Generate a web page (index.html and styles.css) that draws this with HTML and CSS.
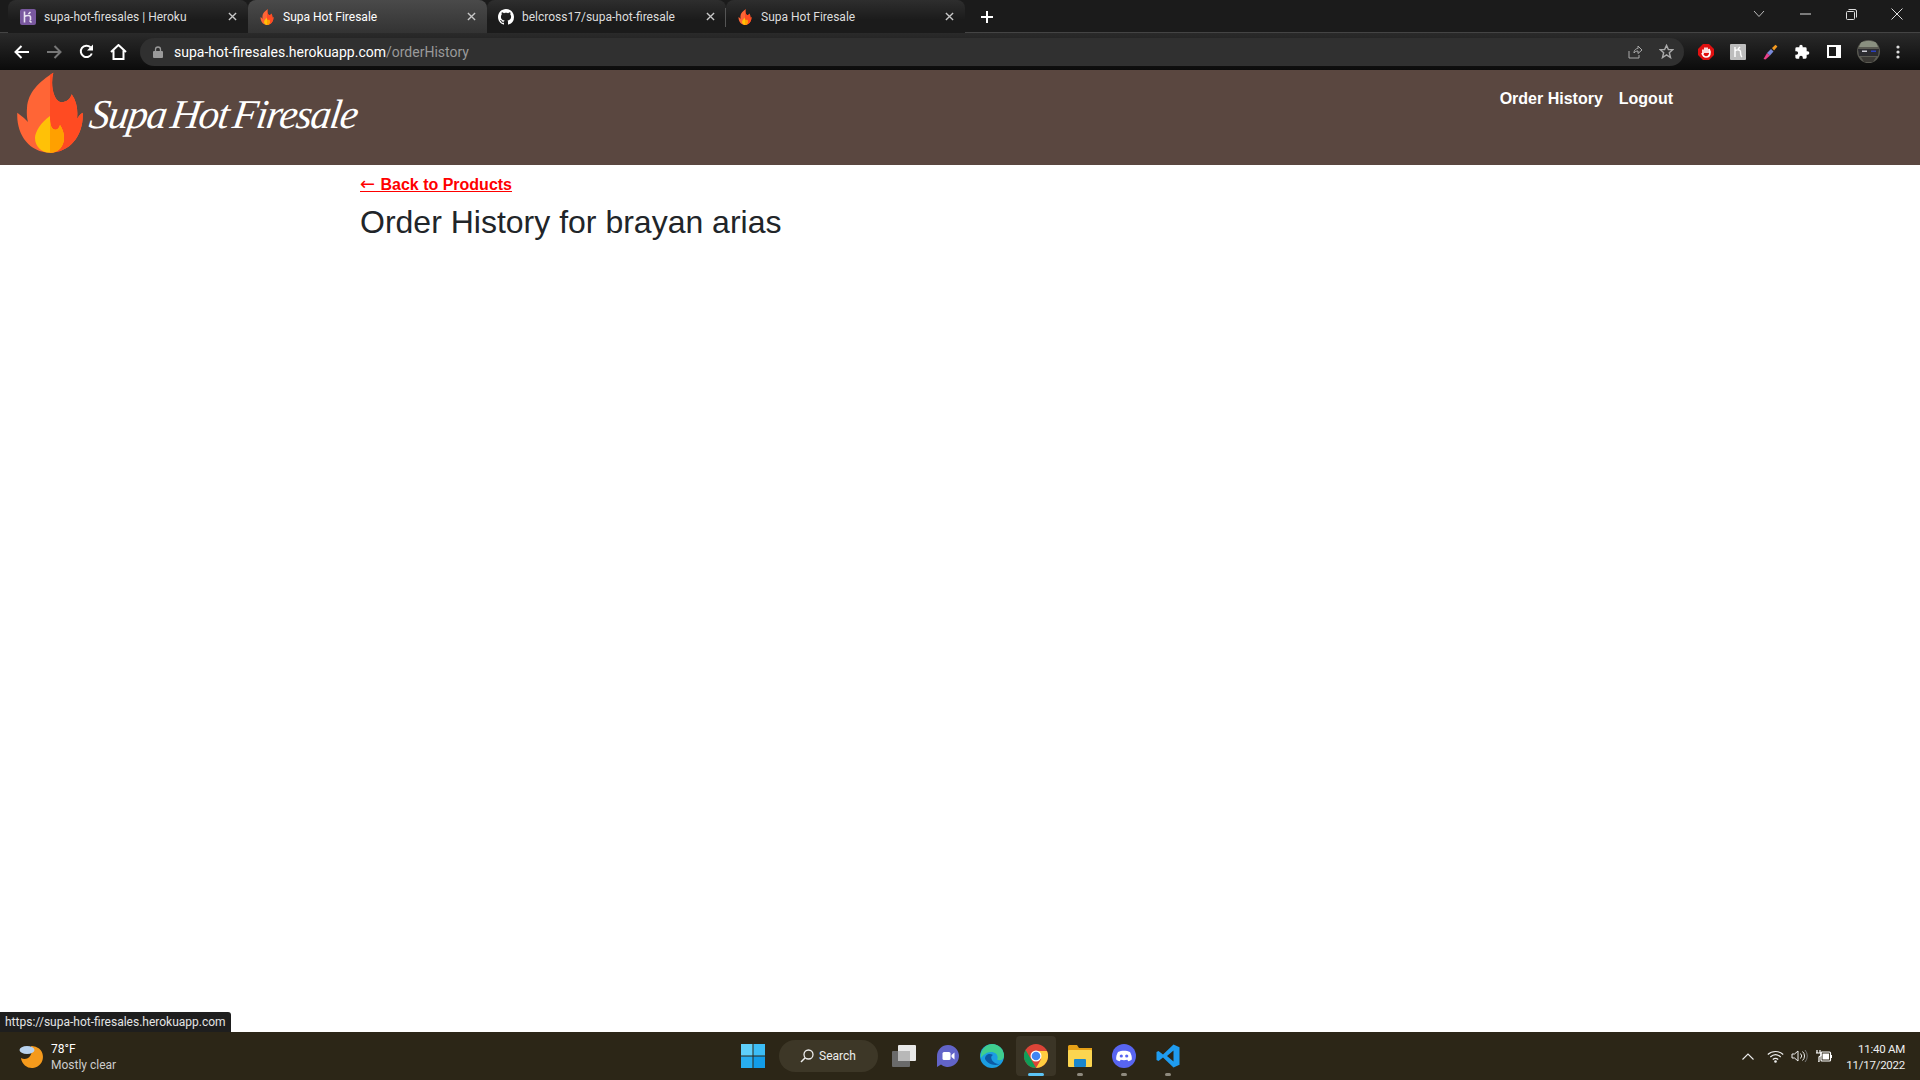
FILE: index.html
```html
<!DOCTYPE html>
<html lang="en">
<head>
    <meta charset="UTF-8">
    <title>Supa Hot Firesale</title>
    <link rel="stylesheet" href="styles.css">
</head>

<body>
    <svg class="defs" width="0" height="0">
        <defs>
            <clipPath id="rightHalf"><rect x="33" y="0" width="34" height="82"></rect></clipPath>
            <symbol id="flame" viewBox="0 0 66 81">
                <path id="flameOuter" fill="#ff6536" d="M36.3 .7C22 10 11 20 10 36C9.5 42 10 47 11 50L7 46L.3 40.7C-1 62 12 80.7 33 80.7C54 80.7 67 62 65.7 40.7C63 42 61 45 60 47C61 38 60 30 54.7 22.3C53 28 48 31 43 30C37 28 33 14 36.3 .7Z"></path>
                <path fill="#ff4b22" clip-path="url(#rightHalf)" d="M36.3 .7C22 10 11 20 10 36C9.5 42 10 47 11 50L7 46L.3 40.7C-1 62 12 80.7 33 80.7C54 80.7 67 62 65.7 40.7C63 42 61 45 60 47C61 38 60 30 54.7 22.3C53 28 48 31 43 30C37 28 33 14 36.3 .7Z"></path>
                <path fill="#ffc107" d="M33 44C24 50 18 60 18 66C18 75 25 80.7 33 80.7C41 80.7 47 75 47 66C47 60 45 56 43 53C42 57 39 59 36 57C33 54 33 49 33 44Z"></path>
                <path fill="#ffa000" clip-path="url(#rightHalf)" d="M33 44C24 50 18 60 18 66C18 75 25 80.7 33 80.7C41 80.7 47 75 47 66C47 60 45 56 43 53C42 57 39 59 36 57C33 54 33 49 33 44Z"></path>
            </symbol>
            <symbol id="closeX" viewBox="0 0 10 10">
                <path d="M1 1L9 9M9 1L1 9" stroke="currentColor" stroke-width="1.5" fill="none"></path>
            </symbol>
        </defs>
    </svg>

    <div class="browser">
        <!-- Tab strip -->
        <div class="tabstrip">
            <div class="tab">
                <svg class="favicon" viewBox="0 0 16 16">
                    <rect width="16" height="16" rx="2" fill="#79589f"></rect>
                    <path d="M4.500 2.500V13.500M4.500 7.500C7 6 10.500 6 10.500 8V11M10.500 3L8.500 5M9.500 11.500L11.500 13.500" stroke="#e9e2f2" stroke-width="1.600" fill="none"></path>
                </svg>
                <span class="tab-title">supa-hot-firesales | Heroku</span>
                <svg class="tab-close"><use href="#closeX"></use></svg>
            </div>
            <div class="tab tab-active">
                <svg class="favicon"><use href="#flame"></use></svg>
                <span class="tab-title">Supa Hot Firesale</span>
                <svg class="tab-close"><use href="#closeX"></use></svg>
            </div>
            <div class="tab tab-sep">
                <svg class="favicon" viewBox="0 0 16 16">
                    <path fill="#fff" d="M8 0C3.58 0 0 3.58 0 8c0 3.54 2.29 6.53 5.47 7.59.4.07.55-.17.55-.38 0-.19-.01-.82-.01-1.49-2.01.37-2.53-.49-2.69-.94-.09-.23-.48-.94-.82-1.13-.28-.15-.68-.52-.01-.53.63-.01 1.08.58 1.23.82.72 1.21 1.87.87 2.33.66.07-.52.28-.87.51-1.07-1.78-.2-3.64-.89-3.64-3.95 0-.87.31-1.59.82-2.15-.08-.2-.36-1.02.08-2.12 0 0 .67-.21 2.2.82.64-.18 1.32-.27 2-.27s1.36.09 2 .27c1.53-1.04 2.2-.82 2.2-.82.44 1.1.16 1.92.08 2.12.51.56.82 1.27.82 2.15 0 3.07-1.87 3.75-3.65 3.95.29.25.54.73.54 1.48 0 1.07-.01 1.93-.01 2.2 0 .21.15.46.55.38A8.01 8.01 0 0 0 16 8c0-4.42-3.58-8-8-8z"></path>
                </svg>
                <span class="tab-title">belcross17/supa-hot-firesale</span>
                <svg class="tab-close"><use href="#closeX"></use></svg>
            </div>
            <div class="tab">
                <svg class="favicon"><use href="#flame"></use></svg>
                <span class="tab-title">Supa Hot Firesale</span>
                <svg class="tab-close"><use href="#closeX"></use></svg>
            </div>
            <div class="new-tab">
                <svg width="14" height="14" viewBox="0 0 14 14"><path d="M7 1V13M1 7H13" stroke="#fff" stroke-width="2"></path></svg>
            </div>
            <div class="window-controls">
                <div class="win-btn">
                    <svg width="12" height="8" viewBox="0 0 12 8"><path d="M1 1L6 6.500L11 1" stroke="#bbb" stroke-width="1" fill="none"></path></svg>
                </div>
                <div class="win-btn">
                    <svg width="11" height="2" viewBox="0 0 11 2"><path d="M0 1H11" stroke="#ddd" stroke-width="1"></path></svg>
                </div>
                <div class="win-btn">
                    <svg width="11" height="11" viewBox="0 0 11 11"><path d="M.5 3.500A1 1 0 0 1 1.500 2.500H7.500A1 1 0 0 1 8.500 3.500V9.500A1 1 0 0 1 7.500 10.500H1.500A1 1 0 0 1 .5 9.500ZM2.500 .5H9A1.500 1.500 0 0 1 10.500 2V8.500" stroke="#ddd" stroke-width="1" fill="none"></path></svg>
                </div>
                <div class="win-btn">
                    <svg width="12" height="12" viewBox="0 0 12 12"><path d="M.5 .5L11.500 11.500M11.500 .5L.5 11.500" stroke="#ddd" stroke-width="1"></path></svg>
                </div>
            </div>
        </div>

        <!-- Toolbar -->
        <div class="toolbar">
            <div class="tool-btn">
                <svg width="16" height="14" viewBox="0 0 16 14"><path d="M15 7H2M7.500 1L1.500 7L7.500 13" stroke="#fff" stroke-width="2" fill="none"></path></svg>
            </div>
            <div class="tool-btn">
                <svg width="16" height="14" viewBox="0 0 16 14"><path d="M1 7H14M8.500 1L14.500 7L8.500 13" stroke="#777" stroke-width="2" fill="none"></path></svg>
            </div>
            <div class="tool-btn">
                <svg width="15" height="15" viewBox="0 0 15 15"><path d="M12.800 9.500A5.700 5.700 0 1 1 11.500 3.300" stroke="#fff" stroke-width="2" fill="none"></path><path d="M14 .5V6.500H8Z" fill="#fff"></path></svg>
            </div>
            <div class="tool-btn">
                <svg width="17" height="16" viewBox="0 0 17 16"><path d="M1 8L8.500 1L16 8M3.500 6.500V15H13.500V6.500" stroke="#fff" stroke-width="2" fill="none"></path></svg>
            </div>
            <div class="omnibox">
                <svg class="lock" width="10" height="12" viewBox="0 0 10 12"><path d="M2.500 5V3.500A2.500 2.500 0 0 1 7.500 3.500V5" stroke="#9a9a9a" stroke-width="1.300" fill="none"></path><rect y="5" width="10" height="7" rx="1" fill="#9a9a9a"></rect></svg>
                <span class="url">supa-hot-firesales.herokuapp.com<span class="url-path">/orderHistory</span></span>
                <svg class="omni-icon" width="16" height="16" viewBox="0 0 16 16"><path d="M2 7V14H12V11M7 9C7 5.500 9.500 4.500 11 4.500V2L15 6L11 9.500V7C9.500 7 8 7.500 7 9Z" stroke="#aaa" stroke-width="1" fill="none"></path></svg>
                <svg class="omni-icon" width="15" height="15" viewBox="0 0 16 16"><path d="M8 1.500L10 6H14.800L11 9.300L12.300 14.500L8 11.600L3.700 14.500L5 9.300L1.200 6H6Z" stroke="#aaa" stroke-width="1.500" fill="none"></path></svg>
            </div>
            <div class="tool-btn tool-first">
                <svg width="16" height="16" viewBox="0 0 16 16"><path d="M5 0H11L16 5V11L11 16H5L0 11V5Z" fill="#e01010"></path><path d="M5 10V5.500M7 9V3.500M9 9V3.500M11 9V5L12 8C12 12 10.500 13 8 13C6 13 5 12 4 9" stroke="#fff" stroke-width="1.700" fill="none"></path></svg>
            </div>
            <div class="tool-btn">
                <svg width="16" height="16" viewBox="0 0 16 16"><rect width="16" height="16" rx="1" fill="#bdbdbd"></rect><path d="M5 3V13M5 7C7 5 11 6 10.500 8C10.500 10 10.500 12 12 13M10 3L8 5" stroke="#fff" stroke-width="1.400" fill="none"></path></svg>
            </div>
            <div class="tool-btn">
                <svg width="16" height="16" viewBox="0 0 16 16"><path d="M1.500 15L5 9L8 11.500L3.500 15.500Z" fill="#e8408a"></path><path d="M5 9L9 5L11.500 7.500L8 11.500Z" fill="#7a8ad8"></path><path d="M10 4L13.500 .8L15.400 2.500L12 6.500Z" fill="#f59a20"></path></svg>
            </div>
            <div class="tool-btn">
                <svg width="16" height="16" viewBox="0 0 24 24"><path fill="#fff" d="M20.500 11H19V7a2 2 0 0 0-2-2h-4V3.500a2.500 2.500 0 0 0-5 0V5H4a2 2 0 0 0-2 2v3.800h1.500a2.700 2.700 0 0 1 0 5.400H2V20a2 2 0 0 0 2 2h3.800v-1.500a2.700 2.700 0 0 1 5.400 0V22H17a2 2 0 0 0 2-2v-4h1.500a2.500 2.500 0 0 0 0-5z"></path></svg>
            </div>
            <div class="tool-btn">
                <svg width="14" height="13" viewBox="0 0 14 13"><rect width="14" height="13" fill="#fff"></rect><rect x="2" y="2" width="7" height="9" fill="#1c1c1c"></rect></svg>
            </div>
            <div class="tool-btn tool-avatar">
                <svg width="23" height="23" viewBox="0 0 23 23">
                    <circle cx="11.500" cy="11.500" r="11.500" fill="#5a5a52"></circle>
                    <path d="M4 2.500C8 .5 15 .5 19 2.500L21 7H2Z" fill="#8a9080"></path>
                    <path d="M1 9H22L21 16H2Z" fill="#2c2c30"></path>
                    <path d="M5 10.500H10V12H5Z" fill="#cfcfd8"></path>
                    <path d="M14 10.500H19V12H14Z" fill="#2a3fc0"></path>
                    <path d="M4 17H19L16 22H7Z" fill="#3a3834"></path>
                </svg>
            </div>
            <div class="tool-btn tool-menu">
                <svg width="4" height="14" viewBox="0 0 4 14"><circle cx="2" cy="2" r="1.600" fill="#ddd"></circle><circle cx="2" cy="7" r="1.600" fill="#ddd"></circle><circle cx="2" cy="12" r="1.600" fill="#ddd"></circle></svg>
            </div>
        </div>

        <!-- Site -->
        <header class="site-header">
            <a class="brand">
                <svg class="brand-flame"><use href="#flame"></use></svg>
                <span class="brand-name">Supa Hot Firesale</span>
            </a>
            <nav class="site-nav">
                <a>Order History</a>
                <a>Logout</a>
            </nav>
        </header>

        <main class="content">
            <a class="back-link"><span class="back-arrow">←</span> Back to Products</a>
            <h1>Order History for brayan arias</h1>
        </main>

        <div class="status-bubble">https://supa-hot-firesales.herokuapp.com</div>

        <!-- Windows taskbar -->
        <footer class="taskbar">
            <div class="weather">
                <svg width="26" height="26" viewBox="0 0 26 26">
                    <path d="M13 3A11 11 0 1 1 3 15C8 18 16 14 13 3Z" fill="#f59a1c"></path>
                    <ellipse cx="9" cy="7" rx="7.500" ry="4" fill="#b9d3ee"></ellipse>
                </svg>
                <div class="weather-text">
                    <span class="weather-temp">78°F</span>
                    <span class="weather-desc">Mostly clear</span>
                </div>
            </div>

            <div class="task-center">
                <svg class="start" width="24" height="24" viewBox="0 0 24 24">
                    <rect width="11.500" height="11.500" fill="#5fd0fb"></rect><rect x="12.500" width="11.500" height="11.500" fill="#3cbdf6"></rect>
                    <rect y="12.500" width="11.500" height="11.500" fill="#28aef0"></rect><rect x="12.500" y="12.500" width="11.500" height="11.500" fill="#129ce8"></rect>
                </svg>
                <div class="search-pill">
                    <svg width="14" height="14" viewBox="0 0 14 14"><circle cx="8.500" cy="5.500" r="4.500" stroke="#eee" stroke-width="1.300" fill="none"></circle><path d="M5.200 8.800L1 13" stroke="#eee" stroke-width="1.500"></path></svg>
                    <span>Search</span>
                </div>
                <div class="task-app">
                    <svg width="24" height="22" viewBox="0 0 24 22"><rect y="6" width="18" height="16" rx="1" fill="#6a6a6a"></rect><rect x="6" width="18" height="16" rx="1" fill="#e8e8e8"></rect><rect x="6" y="6" width="12" height="10" fill="#b8b8b8"></rect></svg>
                </div>
                <div class="task-app">
                    <svg width="24" height="24" viewBox="0 0 24 24"><path d="M12 1A11 11 0 1 1 5 20.500L1 23V12A11 11 0 0 1 12 1Z" fill="#6264c8"></path><rect x="6.500" y="8" width="8" height="8" rx="1.500" fill="#fff"></rect><path d="M15.500 11L18.500 8.500V15.500L15.500 13Z" fill="#fff"></path></svg>
                </div>
                <div class="task-app">
                    <svg width="24" height="24" viewBox="0 0 24 24"><circle cx="12" cy="12" r="12" fill="#1b9de2"></circle><path d="M12 0A12 12 0 0 1 24 12C24 16 20 17 17 15.500C19 12 16 8 11 8C7 8 3 11 1 14A12 12 0 0 1 12 0Z" fill="#3fce8e"></path><path d="M5 15C5 10 10 9 13 11C10 12 11 17 15 19C18 20.500 20 20 21 19.500A12 12 0 0 1 5 15Z" fill="#0c59a4"></path></svg>
                </div>
                <div class="task-app task-app-active">
                    <svg width="24" height="24" viewBox="0 0 24 24">
                        <circle cx="12" cy="12" r="12" fill="#db4437"></circle>
                        <path d="M1.600 6L7 15.300L12 24A12 12 0 0 1 1.600 6Z" fill="#0f9d58"></path>
                        <path d="M12 24L17.200 15L12 7H23A12 12 0 0 1 12 24Z" fill="#ffcd40"></path>
                        <circle cx="12" cy="12" r="5.500" fill="#fff"></circle><circle cx="12" cy="12" r="4.300" fill="#4285f4"></circle>
                    </svg>
                    <span class="running running-on"></span>
                </div>
                <div class="task-app">
                    <svg width="24" height="22" viewBox="0 0 24 22"><path d="M0 1.500A1.500 1.500 0 0 1 1.500 0H9L11 3H24V7H0Z" fill="#e6a117"></path><rect y="5" width="24" height="17" rx="1" fill="#fcd550"></rect><rect x="6" y="14" width="12" height="8" rx="1" fill="#1a86cc"></rect></svg>
                    <span class="running"></span>
                </div>
                <div class="task-app">
                    <svg width="24" height="24" viewBox="0 0 24 24"><circle cx="12" cy="12" r="12" fill="#5865f2"></circle><path d="M6 8C9.500 6.300 14.500 6.300 18 8C19.500 10.500 20 13 19.800 15.500C18.500 16.500 17.300 17 16.300 17.200L15.300 15.700C13 16.300 11 16.300 8.700 15.700L7.700 17.200C6.700 17 5.500 16.500 4.200 15.500C4 13 4.500 10.500 6 8Z" fill="#fff"></path><circle cx="9.300" cy="12" r="1.600" fill="#5865f2"></circle><circle cx="14.700" cy="12" r="1.600" fill="#5865f2"></circle></svg>
                    <span class="running"></span>
                </div>
                <div class="task-app">
                    <svg width="24" height="24" viewBox="0 0 24 24"><path d="M17.500 .5L23.500 3.300V20.700L17.500 23.500L7 13.500L2.500 17L.5 16V8L2.500 7L7 10.500ZM17.500 6.500L11 12L17.500 17.500Z" fill="#1f9cf0" fill-rule="evenodd"></path></svg>
                    <span class="running"></span>
                </div>
            </div>

            <div class="tray">
                <svg class="tray-chevron" width="12" height="7" viewBox="0 0 12 7"><path d="M.5 6.500L6 1L11.500 6.500" stroke="#eee" stroke-width="1.100" fill="none"></path></svg>
                <svg width="17" height="13" viewBox="0 0 17 13"><path d="M.8 4.500C5 .5 12 .5 16.200 4.500M3.300 7C6.500 4 10.500 4 13.700 7M5.800 9.500C7.500 8 9.500 8 11.200 9.500" stroke="#eee" stroke-width="1.100" fill="none"></path><circle cx="8.500" cy="11.500" r="1.300" fill="#eee"></circle></svg>
                <svg width="18" height="14" viewBox="0 0 18 14"><path d="M1 5V9H3.500L7 12V2L3.500 5Z" stroke="#eee" stroke-width="1" fill="none"></path><path d="M9.500 4.500A3.500 3.500 0 0 1 9.500 9.500M11.500 2.500A6 6 0 0 1 11.500 11.500" stroke="#eee" stroke-width="1" fill="none"></path><path d="M14 1A9 9 0 0 1 14 13" stroke="#777" stroke-width="1" fill="none"></path></svg>
                <svg width="16" height="12" viewBox="0 0 16 12"><path d="M1 0V3M4 0V3M0 3H5V5.500L3 7V12H2" stroke="#fff" stroke-width="1.200" fill="none"></path><rect x="5" y="2" width="9.500" height="9" rx="1" stroke="#fff" stroke-width="1.200" fill="none"></rect><rect x="6.500" y="3.500" width="6.500" height="6" fill="#fff"></rect><rect x="15" y="5" width="1" height="3" fill="#fff"></rect></svg>
                <div class="clock">
                    <span>11:40 AM</span>
                    <span>11/17/2022</span>
                </div>
            </div>
        </footer>
    </div>
</body>

</html>
```

FILE: styles.css
```css
/* General styles */
* {
    box-sizing: border-box;
}

html,
body {
    margin: 0;
    padding: 0;
    height: 100%;
    overflow: hidden;
    background-color: #fff;
}

body {
    font-family: "Liberation Sans", Arial, sans-serif;
    color: #212529;
}

.defs {
    position: absolute;
}

.browser {
    position: relative;
    height: 100vh;
    display: flex;
    flex-direction: column;
}

/* Tab strip */
.tabstrip {
    height: 33px;
    flex: none;
    display: flex;
    padding-left: 8px;
    background: #1b1b1b;
    border-bottom: 1px solid #444;
    font-family: Roboto, "Noto Sans", sans-serif;
    font-size: 12px;
    color: #ddd;
}

.tab {
    width: 239px;
    height: 33px;
    flex: none;
    display: flex;
    align-items: center;
    padding: 0 11px 0 11px;
    gap: 8px;
    border-radius: 8px 8px 0 0;
    background: linear-gradient(#2e2e2e, #1b1b1b 60%);
    position: relative;
}

.tab:first-child {
    width: 240px;
    padding-left: 12px;
}

.tab-active {
    background: linear-gradient(#4a4a4a, #333);
    color: #fff;
    z-index: 1;
}

.tab-sep::after {
    content: "";
    position: absolute;
    right: 0;
    top: 8px;
    height: 19px;
    width: 1px;
    background: #555;
}

.favicon {
    width: 16px;
    height: 16px;
    flex: none;
}

.tab-title {
    flex: 1;
    white-space: nowrap;
    overflow: hidden;
}

.tab-close {
    width: 9px;
    height: 9px;
    flex: none;
    color: #c8c8c8;
}

.new-tab {
    width: 32px;
    height: 33px;
    margin-left: 6px;
    display: flex;
    align-items: center;
    justify-content: center;
}

.window-controls {
    margin-left: auto;
    display: flex;
}

.win-btn {
    width: 46px;
    height: 28px;
    display: flex;
    align-items: center;
    justify-content: center;
}

/* Toolbar */
.toolbar {
    height: 37px;
    flex: none;
    display: flex;
    align-items: center;
    padding: 0 10px 0 6px;
    background: linear-gradient(#2a2a2a, #0b0b0b);
}

.tool-btn {
    width: 32px;
    height: 32px;
    flex: none;
    display: flex;
    align-items: center;
    justify-content: center;
}

.tool-first {
    margin-left: 6px;
}

.tool-avatar {
    width: 36px;
}

.tool-menu {
    width: 24px;
}

.omnibox {
    flex: 1;
    height: 28px;
    margin-left: 6px;
    display: flex;
    align-items: center;
    padding: 0 10px 0 13px;
    border-radius: 14px;
    background: #303030;
    font-family: Roboto, "Noto Sans", sans-serif;
    font-size: 14px;
    color: #fff;
}

.lock {
    margin-right: 11px;
}

.url {
    flex: 1;
}

.url-path {
    color: #9a9a9a;
}

.omni-icon {
    margin-left: 16px;
}

/* Site header */
.site-header {
    height: 95px;
    flex: none;
    display: flex;
    justify-content: space-between;
    align-items: flex-start;
    padding: 0 247px 0 17px;
    background-color: #5a4740;
}

.brand {
    display: flex;
    align-items: center;
    padding-top: 2px;
    color: #fff;
}

.brand-flame {
    width: 66px;
    height: 81px;
    flex: none;
}

.brand-name {
    margin-left: 7px;
    width: 270px;
    font-family: "Liberation Serif", serif;
    font-style: italic;
    font-size: 41px;
    line-height: 60px;
    letter-spacing: -1.400px;
    word-spacing: -4px;
    white-space: nowrap;
    transform: skewX(-8deg) translateY(1px);
}

.site-nav {
    display: flex;
    gap: 16px;
    padding-top: 17px;
    font-size: 16px;
    line-height: 24px;
    font-weight: bold;
    color: #fff;
}

/* Page content */
.content {
    flex: 1;
    padding: 8px 0 0 360px;
}

.back-link {
    display: block;
    font-size: 16px;
    line-height: 24px;
    font-weight: bold;
    color: #f00;
    text-decoration: underline;
}

.back-arrow {
    font-family: "DejaVu Sans", sans-serif;
    font-size: 18px;
    line-height: 0;
    font-weight: normal;
    letter-spacing: .9px;
}

h1 {
    margin: 6px 0 0;
    font-size: 32px;
    line-height: 38px;
    font-weight: 400;
    color: #212529;
}

/* Link preview bubble, sits over the page */
.status-bubble {
    position: absolute;
    left: 0;
    bottom: 48px;
    width: 231px;
    height: 20px;
    padding: 0 5px;
    border-top-right-radius: 3px;
    background: #1e1e1e;
    font-family: Roboto, "Noto Sans", sans-serif;
    font-size: 12px;
    line-height: 20px;
    color: #e4e4e4;
    white-space: nowrap;
}

/* Taskbar */
.taskbar {
    height: 48px;
    flex: none;
    display: grid;
    grid-template-columns: 1fr auto 1fr;
    align-items: center;
    background: #2c2617;
    font-family: Roboto, "Noto Sans", sans-serif;
    color: #fff;
}

.weather {
    display: flex;
    align-items: center;
    padding-left: 18px;
    gap: 7px;
    font-size: 12px;
    line-height: 16px;
}

.weather-text {
    display: flex;
    flex-direction: column;
    padding-top: 2px;
}

.weather-desc {
    color: #ccc;
}

.task-center {
    display: flex;
    align-items: center;
    height: 48px;
    padding-left: 10px;
}

.start {
    margin-right: 14px;
}

.search-pill {
    width: 99px;
    height: 32px;
    display: flex;
    align-items: center;
    justify-content: center;
    gap: 5px;
    margin-right: 4px;
    border-radius: 16px;
    background: #3d3727;
    font-size: 12px;
    color: #eee;
}

.task-app {
    position: relative;
    width: 44px;
    height: 40px;
    display: flex;
    align-items: center;
    justify-content: center;
}

.task-app-active {
    background: #3b3526;
    border-radius: 4px;
    width: 40px;
    margin: 0 2px;
}

.running {
    position: absolute;
    left: 50%;
    bottom: 0;
    width: 6px;
    height: 3px;
    margin-left: -3px;
    border-radius: 2px;
    background: #8f8a7e;
}

.running-on {
    width: 16px;
    margin-left: -8px;
    background: #5cc4f5;
}

.tray {
    display: flex;
    align-items: center;
    justify-content: flex-end;
    gap: 7px;
    padding-right: 15px;
}

.tray-chevron {
    margin-right: 6px;
}

.clock {
    display: flex;
    flex-direction: column;
    align-items: flex-end;
    margin-left: 7px;
    padding-top: 2px;
    font-size: 11.5px;
    letter-spacing: -.25px;
    line-height: 16px;
    color: #eee;
}
```
